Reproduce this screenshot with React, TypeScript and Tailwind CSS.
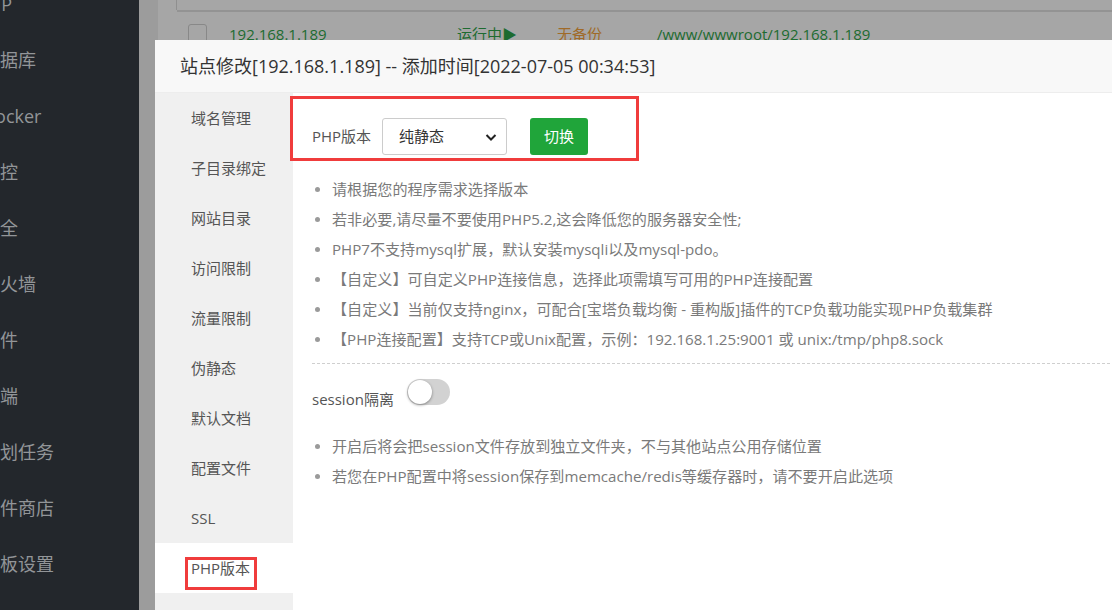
import React from 'react';

const font = { fontFamily: '"Open Sans", "Noto Sans CJK SC", sans-serif' };

const sideItems = ['FTP', '数据库', 'Docker', '监控', '安全', '防火墙', '文件', '终端', '计划任务', '软件商店', '面板设置'];

const tabs = ['域名管理', '子目录绑定', '网站目录', '访问限制', '流量限制', '伪静态', '默认文档', '配置文件', 'SSL', 'PHP版本'];

const tips = [
  '请根据您的程序需求选择版本',
  '若非必要,请尽量不要使用PHP5.2,这会降低您的服务器安全性;',
  'PHP7不支持mysql扩展，默认安装mysqli以及mysql-pdo。',
  '【自定义】可自定义PHP连接信息，选择此项需填写可用的PHP连接配置',
  '【自定义】当前仅支持nginx，可配合[宝塔负载均衡 - 重构版]插件的TCP负载功能实现PHP负载集群',
  '【PHP连接配置】支持TCP或Unix配置，示例：192.168.1.25:9001 或 unix:/tmp/php8.sock',
];

const sessionTips = [
  '开启后将会把session文件存放到独立文件夹，不与其他站点公用存储位置',
  '若您在PHP配置中将session保存到memcache/redis等缓存器时，请不要开启此选项',
];

function Tip({ text }: { text: string }) {
  return (
    <li className="flex items-center h-[30px]">
      <span className="w-[5px] h-[5px] rounded-full bg-[#9a9a9a] ml-[3px] mr-[12px] shrink-0" />
      <span className="whitespace-nowrap">{text}</span>
    </li>
  );
}

export default function App() {
  return (
    <div className="relative w-[1112px] h-[610px] overflow-hidden flex" style={font}>
      {/* dimmed page behind */}
      <aside className="w-[139px] h-full bg-[#23272c] flex flex-col overflow-hidden">
        <div className="flex flex-col ml-[-18px] mt-[-24px]">
          {sideItems.map((s) => (
            <div key={s} className="h-[56.1px] flex items-center text-[18px] text-[#929598] whitespace-nowrap">
              {s}
            </div>
          ))}
        </div>
      </aside>
      <main className="flex-1 h-full bg-[#a6a6a6] flex">
        <div className="w-[19px] h-full bg-[#9c9c9c]" />
        <div className="flex-1 flex flex-col">
          <div className="h-[10px] flex">
            <div className="w-[19px] border-r border-[#8f8f8f]" />
          </div>
          <div className="h-[2px] bg-[#939393] ml-[19px]" />
          <div className="flex items-start pt-[12px] text-[15px] text-[#1d6b30]">
            <div className="ml-[30px] w-[19px] h-[19px] border border-[#888] rounded-[3px]" />
            <span className="ml-[22px] w-[228px] mt-[-1px]">192.168.1.189</span>
            <span className="w-[100px] mt-[-1px]">运行中▶</span>
            <span className="w-[100px] mt-[-1px] text-[#a06a28]">无备份</span>
            <span className="mt-[-1px]">/www/wwwroot/192.168.1.189</span>
          </div>
        </div>
      </main>

      {/* dialog */}
      <div className="absolute left-[155px] top-[40px] w-[1000px] h-[600px] bg-white flex flex-col">
        <div className="h-[53px] bg-[#f8f8f8] border-b border-[#ededed] flex items-center pl-[25px] text-[18px] text-[#333]">
          站点修改[192.168.1.189] -- 添加时间[2022-07-05 00:34:53]
        </div>
        <div className="flex flex-1">
          <div className="w-[138px] bg-[#f0f0f0] flex flex-col">
            {tabs.map((t) => (
              <div
                key={t}
                className={`h-[50px] flex items-center pl-[36px] text-[15px] text-[#555] ${t === 'PHP版本' ? 'bg-white' : ''}`}
              >
                {t}
              </div>
            ))}
          </div>
          <div className="flex-1 pl-[19px] pt-[25px]">
            <div className="flex items-center h-[37px] text-[15px] text-[#555]">
              <span className="w-[70px]">PHP版本</span>
              <div className="w-[125px] h-[37px] border border-[#ccc] rounded-[3px] flex items-center justify-between pl-[16px] pr-[8px] text-[#333]">
                <span>纯静态</span>
                <svg width="14" height="14" viewBox="0 0 14 14">
                  <path d="M2.5 5l4.5 4.5 4.5-4.5" fill="none" stroke="#222" strokeWidth="2" />
                </svg>
              </div>
              <button className="ml-[23px] w-[58px] h-[37px] bg-[#20a53a] rounded-[3px] text-white text-[15px]">切换</button>
            </div>
            <ul className="mt-[19px] text-[15.1px] text-[#7a7a7a]">
              {tips.map((t) => (
                <Tip key={t} text={t} />
              ))}
            </ul>
            <div className="mt-[9px] border-t border-dashed border-[#cfcfcf]" />
            <div className="flex items-center mt-[14px] h-[28px] text-[15px] text-[#555]">
              <span className="w-[95px] mt-[15px]">session隔离</span>
              <div className="w-[43px] h-[26px] rounded-full bg-[#d2d2d2] relative">
                <div className="absolute left-[1px] top-[1px] w-[24px] h-[24px] rounded-full bg-white shadow-[0_1px_3px_rgba(0,0,0,0.4)]" />
              </div>
            </div>
            <ul className="mt-[25px] text-[15.1px] text-[#7a7a7a]">
              {sessionTips.map((t) => (
                <Tip key={t} text={t} />
              ))}
            </ul>
          </div>
        </div>
      </div>

      {/* red annotation boxes */}
      <div className="absolute left-[290px] top-[96px] w-[349px] h-[65px] border-[3px] border-[#f03c3c]" />
      <div className="absolute left-[185px] top-[557px] w-[72px] h-[33px] border-[3px] border-[#f03c3c]" />
    </div>
  );
}
